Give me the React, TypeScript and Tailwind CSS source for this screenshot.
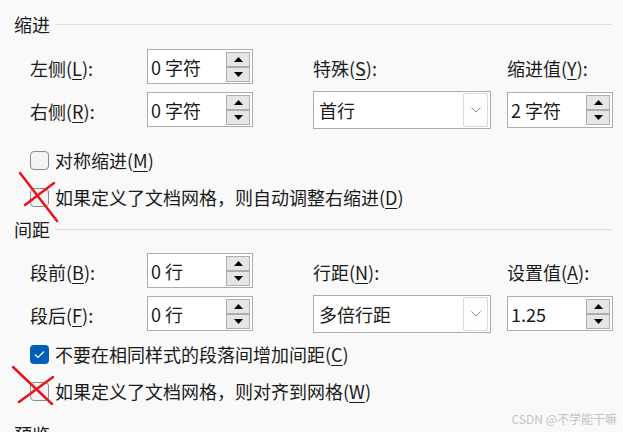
import React from 'react';

const Mn: React.FC<{ k: string }> = ({ k }) => <span className="underline underline-offset-[3px] decoration-1">{k}</span>;

// label like 左侧(L):
const Label: React.FC<{ text: string; k: string; colon?: boolean }> = ({ text, k, colon = true }) => (
  <span className="whitespace-nowrap">
    {text}(<Mn k={k} />){colon ? ':' : ''}
  </span>
);

const SpinBtn: React.FC<{ up?: boolean }> = ({ up }) => (
  <div className="flex flex-1 items-center justify-center border border-[#adadad] bg-[#e6e6e6]">
    <svg width="9" height="5" viewBox="0 0 9 5">
      {up ? <polygon points="0,5 4.5,0 9,5" fill="#000" /> : <polygon points="0,0 9,0 4.5,5" fill="#000" />}
    </svg>
  </div>
);

const Spin: React.FC<{ value: string; h?: string }> = ({ value, h = 'h-[35px]' }) => (
  <div className={`flex ${h} w-[106px] items-center border border-[#acacac] bg-white pl-[3px] pr-[2px]`}>
    <span className="flex-1 leading-none">{value}</span>
    <div className="flex h-[30px] w-[24px] flex-col">
      <SpinBtn up />
      <SpinBtn />
    </div>
  </div>
);

const Select: React.FC<{ value: string }> = ({ value }) => (
  <div className="flex h-[38px] w-[178px] items-center border border-[#acacac] bg-white pl-[5px] pr-[2px]">
    <span className="flex-1 leading-none">{value}</span>
    <div className="flex h-[34px] w-[25px] items-center justify-center rounded-[2px] border border-[#d9d9d9] bg-[#fdfdfd]">
      <svg width="10" height="6" viewBox="0 0 10 6">
        <polyline points="0.5,0.5 5,5 9.5,0.5" fill="none" stroke="#8a8a8a" strokeWidth="1" />
      </svg>
    </div>
  </div>
);

const Heading: React.FC<{ text: string; mt: string }> = ({ text, mt }) => (
  <div className={`${mt} flex h-[24px] items-center pl-[14px] pr-[11px]`}>
    <span className="leading-none">{text}</span>
    <div className="ml-[5px] h-px flex-1 bg-[#dcdcdc]" />
  </div>
);

const Check: React.FC<{ checked?: boolean; mt: string; children: React.ReactNode }> = ({ checked, mt, children }) => (
  <div className={`${mt} flex h-[24px] items-center pl-[30px]`}>
    {checked ? (
      <div className="flex h-[19px] w-[19px] items-center justify-center rounded-[4px] bg-[#005fb8]">
        <svg width="11" height="9" viewBox="0 0 11 9">
          <polyline points="1,4.5 4,7.5 10,1.5" fill="none" stroke="#fff" strokeWidth="1.2" />
        </svg>
      </div>
    ) : (
      <div className="h-[19px] w-[19px] rounded-[4px] border border-[#8c8c8c] bg-[#f3f3f3]" />
    )}
    <span className="ml-[6px] whitespace-nowrap leading-none">{children}</span>
  </div>
);

const FieldRows: React.FC<{
  l1: React.ReactNode; v1: string; l2: React.ReactNode; v2: string;
  l3: React.ReactNode; sel: string; l4: React.ReactNode; v4: string; mt: string; spin4h: string;
}> = ({ l1, v1, l2, v2, l3, sel, l4, v4, mt, spin4h }) => (
  <div className={`${mt} flex`}>
    <div className="flex w-[313px] flex-col gap-[8px] pl-[30px]">
      <div className="flex items-center">
        <div className="w-[117px] pt-[3px]">{l1}</div>
        <Spin value={v1} />
      </div>
      <div className="flex items-center">
        <div className="w-[117px] pt-[3px]">{l2}</div>
        <Spin value={v2} />
      </div>
    </div>
    <div className="flex w-[194px] flex-col">
      <div className="flex h-[35px] items-center pt-[3px]">{l3}</div>
      <div className="mt-[7px]">
        <Select value={sel} />
      </div>
    </div>
    <div className="flex flex-col">
      <div className="flex h-[35px] items-center pt-[3px]">{l4}</div>
      <div className="mt-[8px]">
        <Spin value={v4} h={spin4h} />
      </div>
    </div>
  </div>
);

export default function App() {
  return (
    <div className="relative h-[432px] w-[623px] overflow-hidden bg-[#f9f9f9] font-['Segoe_UI','Noto_Sans_CJK_SC','Noto_Sans',sans-serif] text-[18px] text-[#1a1a1a]">
      <Heading text="缩进" mt="mt-[12px]" />
      <FieldRows
        mt="mt-[13px]"
        l1={<Label text="左侧" k="L" />}
        v1="0 字符"
        l2={<Label text="右侧" k="R" />}
        v2="0 字符"
        l3={<Label text="特殊" k="S" />}
        sel="首行"
        l4={<Label text="缩进值" k="Y" />}
        v4="2 字符"
        spin4h="h-[36px]"
      />
      <Check mt="mt-[19px]">
        <Label text="对称缩进" k="M" colon={false} />
      </Check>
      <Check mt="mt-[13px]">
        <Label text="如果定义了文档网格，则自动调整右缩进" k="D" colon={false} />
      </Check>

      <Heading text="间距" mt="mt-[8px]" />
      <FieldRows
        mt="mt-[12px]"
        l1={<Label text="段前" k="B" />}
        v1="0 行"
        l2={<Label text="段后" k="F" />}
        v2="0 行"
        l3={<Label text="行距" k="N" />}
        sel="多倍行距"
        l4={<Label text="设置值" k="A" />}
        v4="1.25"
        spin4h="h-[35px]"
      />
      <Check checked mt="mt-[9px]">
        <Label text="不要在相同样式的段落间增加间距" k="C" colon={false} />
      </Check>
      <Check mt="mt-[13px]">
        <Label text="如果定义了文档网格，则对齐到网格" k="W" colon={false} />
      </Check>
      <Heading text="预览" mt="mt-[19px]" />

      {/* red annotation marks */}
      <svg className="pointer-events-none absolute left-0 top-0" width="623" height="432">
        <g stroke="#e8141b" strokeWidth="2.5" strokeLinecap="round" fill="none">
          <path d="M20 173 L57 221" />
          <path d="M54 183 L25 205" />
          <path d="M13 367 L52 404" />
          <path d="M53 377 L19 402" />
        </g>
      </svg>

      <div className="absolute right-[6px] top-[413px] text-[12px] leading-none text-[#c4c4c4]">CSDN @不学能干嘛</div>
    </div>
  );
}
